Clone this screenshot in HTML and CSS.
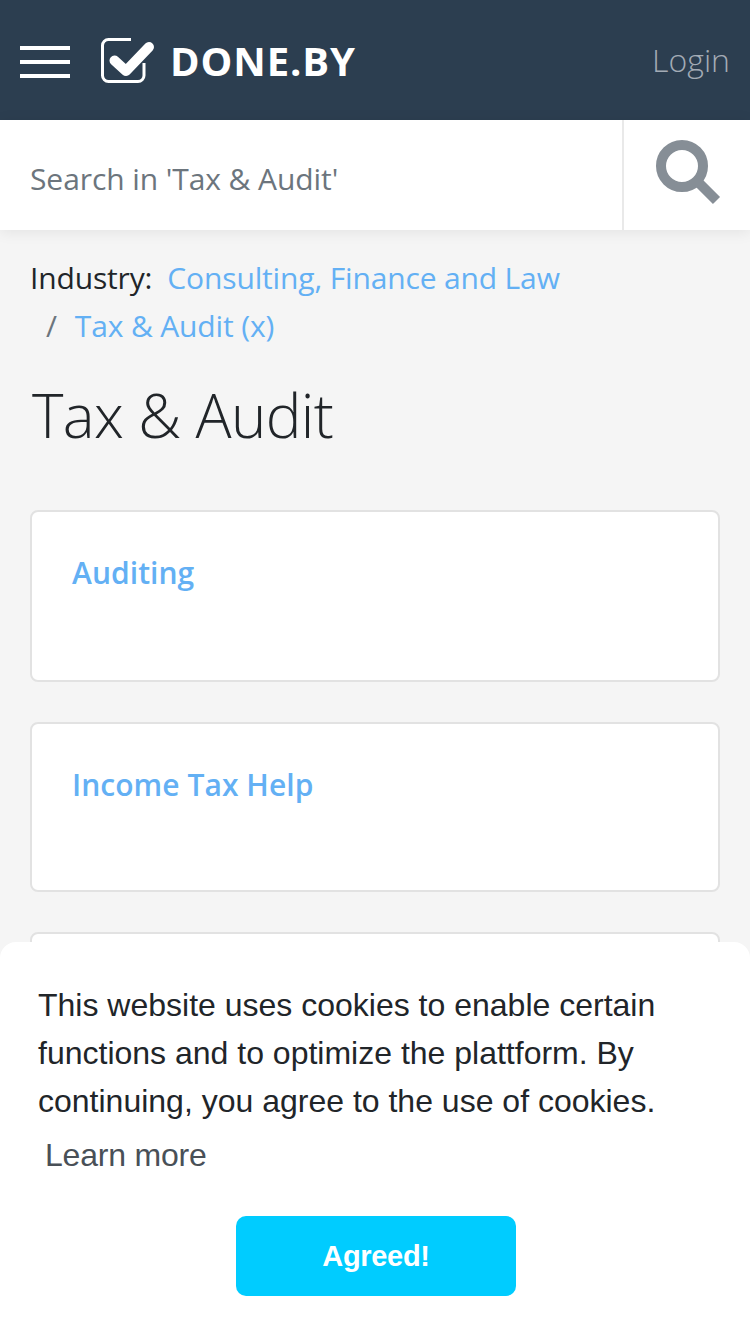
FILE: index.html
```html
<!DOCTYPE html>
<html>
  <head>
    <title>Tax &amp; Audit - done.by</title>
    <link rel="stylesheet" href="styles.css">
  </head>
  <body>
    <header class="topbar">
      <div class="burger"><span></span><span></span><span></span></div>
      <svg class="logo-icon" width="56" height="48" viewBox="0 0 56 48">
        <path d="M31 3.5H8.5a6 6 0 0 0-6 6v30a6 6 0 0 0 6 6H38a6 6 0 0 0 6-6V27" fill="none" stroke="#fff" stroke-width="3"/>
        <path d="M14.5 24.500l11.500 10.500L49 11" fill="none" stroke="#fff" stroke-width="10" stroke-linejoin="round" stroke-linecap="round"/>
      </svg>
      <span class="logo-text">DONE.BY</span>
      <a class="login">Login</a>
    </header>

    <div class="searchbar">
      <div class="search-text">Search in 'Tax &amp; Audit'</div>
      <div class="search-btn">
        <svg width="66" height="66" viewBox="0 0 66 66">
          <circle cx="27" cy="27" r="21" fill="none" stroke="#868e96" stroke-width="10"/>
          <path d="M43 43l18.500 18.500" fill="none" stroke="#868e96" stroke-width="10"/>
        </svg>
      </div>
    </div>

    <main class="content">
      <div class="crumbs">
        <div><span class="crumb-label">Industry:</span><a class="crumb-link">Consulting, Finance and Law</a></div>
        <div class="crumb-second"><span class="crumb-sep">/</span><a class="crumb-link">Tax &amp; Audit (x)</a></div>
      </div>
      <h1>Tax &amp; Audit</h1>
      <div class="card card-first"><a>Auditing</a></div>
      <div class="card card-second"><a>Income Tax Help</a></div>
      <div class="card"></div>
    </main>

    <div class="cookie">
      <p>This website uses cookies to enable certain functions and to optimize the plattform. By continuing, you agree to the use of cookies.</p>
      <a class="learn">Learn more</a>
      <div class="agree-row"><button class="agree">Agreed!</button></div>
    </div>
  </body>
</html>
```

FILE: styles.css
```css
* {
  box-sizing: border-box;
}

html,
body {
  height: 1334px;
  overflow: hidden;
}

body {
  margin: 0;
  font-family: "Open Sans", "Noto Sans", sans-serif;
  background-color: #f5f5f5;
  color: #212529;
}

.topbar {
  height: 120px;
  background-color: #2c3e50;
  display: flex;
  align-items: center;
  padding: 0 20px;
}

.burger {
  width: 50px;
  display: flex;
  flex-direction: column;
  gap: 10px;
  margin: 4px 30px 0 0;
}

.burger span {
  display: block;
  height: 4px;
  background-color: #fff;
}

.logo-text {
  color: #fff;
  font-size: 40px;
  font-weight: 700;
  letter-spacing: 0.9px;
  margin-left: 14px;
}

.login {
  margin: 0 0 2px auto;
  color: #a3abb5;
  font-size: 32px;
  font-weight: 300;
}

.searchbar {
  height: 110px;
  background-color: #fff;
  display: flex;
  box-shadow: 0 2px 14px rgba(0, 0, 0, 0.08);
}

.search-text {
  flex: 1;
  padding: 40px 0 0 30px;
  font-size: 30px;
  line-height: 38px;
  font-weight: 500;
  color: #6c757d;
  letter-spacing: -0.08px;
}

.search-btn {
  width: 128px;
  border-left: 2px solid #e9e9e9;
  padding: 19px 0 0 31px;
}

.content {
  padding: 24px 30px 0;
}

.crumbs {
  font-size: 30px;
  line-height: 48px;
  letter-spacing: -0.15px;
}

.crumb-label {
  margin-right: 15px;
}

.crumb-link {
  color: #63b0f4;
}

.crumb-second {
  padding-left: 16px;
}

.crumb-sep {
  color: #6c757d;
  margin-right: 18px;
}

h1 {
  margin: 29px 0 59px 2px;
  font-size: 60px;
  line-height: 72px;
  font-weight: 300;
  letter-spacing: -0.6px;
}

.card {
  background-color: #fff;
  border: 2px solid #e2e2e2;
  border-radius: 8px;
  height: 172px;
  padding: 40px;
  margin-bottom: 40px;
  font-size: 30px;
  line-height: 42px;
  font-weight: 600;
  letter-spacing: 0.05px;
  color: #63b0f4;
}

.card-second {
  height: 170px;
}

.cookie {
  position: fixed;
  left: 0;
  right: 0;
  bottom: 0;
  height: 392px;
  background-color: #fff;
  border-radius: 16px 16px 0 0;
  padding: 39px 36px 0 38px;
  font-family: "Liberation Sans", Arial, sans-serif;
  font-size: 32px;
  line-height: 48px;
}

.cookie p {
  margin: 0;
}

.learn {
  display: block;
  margin: 6px 0 0 7px;
  color: #495057;
  letter-spacing: -0.2px;
}

.agree-row {
  display: flex;
  justify-content: center;
  margin: 37px 0 0;
}

.agree {
  width: 280px;
  height: 80px;
  border: none;
  border-radius: 10px;
  background-color: #00ccff;
  color: #fff;
  font-family: "Liberation Sans", Arial, sans-serif;
  font-size: 29px;
  font-weight: 700;
  letter-spacing: -0.3px;
}
```
